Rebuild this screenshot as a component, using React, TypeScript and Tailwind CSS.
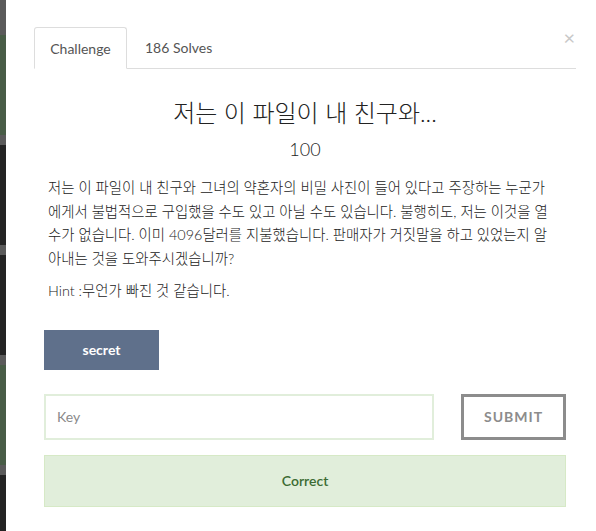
const font = { fontFamily: 'Lato, "Noto Sans CJK KR", sans-serif' }

function Backdrop() {
  return (
    <div className="flex w-[6px] shrink-0 flex-col bg-[#222]">
      <div className="h-[35px] bg-[#5a5a5a]" />
      <div className="h-[100px] bg-[#485c46]" />
      <div className="h-[10px] bg-[#5a5a5a]" />
      <div className="h-[100px] bg-[#232323]" />
      <div className="h-[10px] bg-[#5a5a5a]" />
      <div className="h-[100px] bg-[#232323]" />
      <div className="h-[10px] bg-[#5a5a5a]" />
      <div className="h-[100px] bg-[#485c46]" />
      <div className="h-[10px] bg-[#5a5a5a]" />
      <div className="flex-1 bg-[#232323]" />
    </div>
  )
}

export default function App() {
  return (
    <div className="flex h-[531px] w-[596px] overflow-hidden bg-white" style={font}>
      <Backdrop />
      <div className="relative flex-1 bg-white pl-[28px] pr-[20px] pt-[27px] text-[#333]">
        <button className="absolute right-[21px] top-[27px] text-[20px] leading-none text-[#c8c8c8]">
          ×
        </button>

        <div className="flex border-b border-[#ddd] text-[14px]">
          <div className="-mb-px flex h-[42px] w-[93px] items-center justify-center rounded-t-[3px] border border-[#ddd] border-b-white bg-white text-[#555]">
            Challenge
          </div>
          <div className="flex h-[41px] items-center pl-[18px] text-[#555]">
            186 Solves
          </div>
        </div>

        <div className="px-[10px]">
          <h2 className="mt-[28px] text-center text-[24px] font-light leading-[32px] text-[#222]">
            저는 이 파일이 내 친구와...
          </h2>
          <div className="mt-[7px] text-center text-[18px] font-light leading-[26px] text-[#222]">
            100
          </div>

          <p className="mt-[14px] whitespace-nowrap pl-[4px] text-[14.4px] font-light leading-[23.7px] text-[#222]">
            저는 이 파일이 내 친구와 그녀의 약혼자의 비밀 사진이 들어 있다고 주장하는 누군가
            <br />
            에게서 불법적으로 구입했을 수도 있고 아닐 수도 있습니다. 불행히도, 저는 이것을 열
            <br />
            수가 없습니다. 이미 4096달러를 지불했습니다. 판매자가 거짓말을 하고 있었는지 알
            <br />
            아내는 것을 도와주시겠습니까?
          </p>
          <p className="mt-[8px] pl-[4px] text-[14.4px] font-light leading-[23.7px] text-[#222]">
            Hint :무언가 빠진 것 같습니다.
          </p>

          <button className="mt-[27px] h-[40px] w-[115px] bg-[#5f708b] text-[14px] font-bold text-white">
            secret
          </button>

          <div className="mt-[24px] flex gap-[27px]">
            <div className="flex h-[46px] flex-1 items-center border-2 border-[#e1eedb] px-[11px] text-[14px] text-[#8a8a8a]">
              Key
            </div>
            <button className="h-[46px] w-[105px] border-[3px] border-[#8c8c8c] text-[14px] font-bold tracking-[1px] text-[#8c8c8c]">
              SUBMIT
            </button>
          </div>

          <div className="mt-[15px] flex h-[52px] items-center justify-center border border-[#d6e9c6] bg-[#e1eedb] text-[14px] font-semibold text-[#3c6b33]">
            Correct
          </div>
        </div>
      </div>
    </div>
  )
}
